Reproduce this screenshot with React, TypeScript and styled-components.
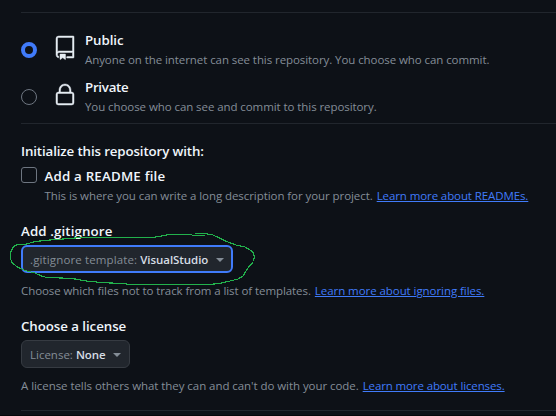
import React from "react";
import styled, { createGlobalStyle } from "styled-components";

const GlobalStyle = createGlobalStyle`
  * { box-sizing: border-box; }
  body {
    margin: 0;
    background: #0d1117;
    color: #f0f6fc;
    font-family: "Open Sans", "Noto Sans", sans-serif;
    overflow: hidden;
  }
`;

const Form = styled.main`
  display: flex;
  flex-direction: column;
  height: 416px;
  padding: 12px 0 0 21px;
  border-bottom: 1px solid #05070a;
`;

const Divider = styled.hr`
  width: 100%;
  height: 1px;
  margin: 0;
  border: 0;
  background: #21262d;
`;

const Choices = styled.section`
  display: flex;
  flex-direction: column;
  gap: 9px;
  padding: 17px 0 8px;
`;

const Choice = styled.label`
  display: flex;
  height: 38px;
`;

const Radio = styled.span<{ $checked?: boolean }>`
  width: 16px;
  height: 16px;
  margin: 12px 16px 0 0;
  border-radius: 50%;
  border: ${(p) => (p.$checked ? "4px solid #407bfa" : "1px solid #6e7681")};
`;

const Icon = styled.svg`
  width: 24px;
  height: 24px;
  margin: 6px 8px 0 0;
  fill: #e6edf3;
  stroke: #e6edf3;
  stroke-width: 0.45px;
  overflow: visible;
`;

const Copy = styled.div`
  display: flex;
  flex-direction: column;
  gap: 1px;
`;

const Title = styled.div<{ $track?: number }>`
  font-size: 13.3px;
  font-weight: 600;
  line-height: 20px;
  letter-spacing: ${(p) => p.$track ?? -0.08}px;
  white-space: nowrap;
`;

const Hint = styled.p<{ $track?: number }>`
  display: flex;
  gap: 4px;
  margin: 0;
  color: #848d97;
  font-size: 11.5px;
  line-height: 17px;
  letter-spacing: ${(p) => p.$track ?? -0.075}px;
  white-space: nowrap;
`;

const Link = styled.a<{ $track: number }>`
  color: #407bfa;
  letter-spacing: ${(p) => p.$track}px;
  text-decoration: underline;
  text-decoration-thickness: 1px;
  text-underline-offset: 1px;
`;

const Readme = styled.section`
  display: flex;
  flex-direction: column;
  gap: 5px;
  padding: 17px 0;
`;

const CheckRow = styled.label`
  display: flex;
  gap: 7.5px;
`;

const Checkbox = styled.span`
  width: 16px;
  height: 16px;
  margin-top: 1px;
  border: 1px solid #6e7681;
  border-radius: 3px;
`;

const Field = styled.section`
  position: relative;
  display: flex;
  flex-direction: column;
  align-items: flex-start;
  margin-bottom: 17px;
  &:last-of-type { margin-bottom: 16px; }
`;

const Select = styled.button<{ $focused?: boolean }>`
  display: flex;
  align-items: flex-start;
  width: ${(p) => (p.$focused ? 212 : 109)}px;
  height: 28px;
  margin: 4px 0 9px;
  padding: ${(p) => (p.$focused ? "4px 7px" : "5px 8px")};
  border: ${(p) => (p.$focused ? "2px solid #407bfa" : "1px solid #363b42")};
  border-radius: 6px;
  background: #21262d;
  color: #848d97;
  font: 400 11.5px/17px "Open Sans", sans-serif;
  letter-spacing: ${(p) => (p.$focused ? 0.13 : 0)}px;
  white-space: nowrap;
`;

const Value = styled.strong`
  margin-left: 3px;
  color: #d6dde4;
  font-weight: 600;
  letter-spacing: -0.06px;
`;

const Caret = styled.span`
  margin: 7px 0 0 auto;
  border: 4px solid transparent;
  border-top-color: #848d97;
  border-bottom: 0;
`;

const Scribble = styled.svg`
  position: absolute;
  top: 9px;
  left: -13px;
  width: 250px;
  height: 58px;
  fill: none;
  stroke: #22b14c;
  stroke-width: 1.15px;
  pointer-events: none;
`;

export default function App() {
  return (
    <>
      <GlobalStyle />
      <Form>
        <Divider />
        <Choices>
          <Choice>
            <Radio $checked />
            <Icon viewBox="0 0 24 24">
              <path d="M3 2.75A2.75 2.75 0 0 1 5.75 0h14.5a.75.75 0 0 1 .75.75v20.5a.75.75 0 0 1-.75.75h-6a.75.75 0 0 1 0-1.5h5.25v-4H6A1.5 1.5 0 0 0 4.5 18v.75c0 .716.43 1.334 1.05 1.605a.75.75 0 0 1-.6 1.374A3.25 3.25 0 0 1 3 18.75ZM19.5 1.5H5.75c-.69 0-1.25.56-1.25 1.25v12.651A2.989 2.989 0 0 1 6 15h13.5Z" />
              <path d="M7 18.25a.25.25 0 0 1 .25-.25h5a.25.25 0 0 1 .25.25v5.01a.25.25 0 0 1-.397.201l-2.206-1.604a.25.25 0 0 0-.294 0L7.397 23.46a.25.25 0 0 1-.397-.2v-5.01Z" />
            </Icon>
            <Copy>
              <Title>Public</Title>
              <Hint>Anyone on the internet can see this repository. You choose who can commit.</Hint>
            </Copy>
          </Choice>
          <Choice>
            <Radio />
            <Icon viewBox="0 0 24 24">
              <path d="M6 9V7.25C6 3.845 8.503 1 12 1s6 2.845 6 6.25V9h.5a2.5 2.5 0 0 1 2.5 2.5v8a2.5 2.5 0 0 1-2.5 2.5h-13A2.5 2.5 0 0 1 3 19.5v-8A2.5 2.5 0 0 1 5.5 9Zm-1.5 2.5v8a1 1 0 0 0 1 1h13a1 1 0 0 0 1-1v-8a1 1 0 0 0-1-1h-13a1 1 0 0 0-1 1Zm3-4.25V9h9V7.25c0-2.67-1.922-4.75-4.5-4.75-2.578 0-4.5 2.08-4.5 4.75Z" />
            </Icon>
            <Copy>
              <Title $track={-0.27}>Private</Title>
              <Hint>You choose who can see and commit to this repository.</Hint>
            </Copy>
          </Choice>
        </Choices>
        <Divider />
        <Readme>
          <Title $track={-0.12}>Initialize this repository with:</Title>
          <CheckRow>
            <Checkbox />
            <Copy>
              <Title $track={0.2}>Add a README file</Title>
              <Hint $track={-0.068}>
                This is where you can write a long description for your project.
                <Link $track={-0.1}>Learn more about READMEs.</Link>
              </Hint>
            </Copy>
          </CheckRow>
        </Readme>
        <Field>
          <Title $track={0.12}>Add .gitignore</Title>
          <Select $focused>
            .gitignore template:
            <Value>VisualStudio</Value>
            <Caret />
          </Select>
          <Hint>
            Choose which files not to track from a list of templates.
            <Link $track={-0.06}>Learn more about ignoring files.</Link>
          </Hint>
          <Scribble viewBox="8 230 250 58" shapeRendering="crispEdges">
            <path d="M195 233.5H205L213 235L221.5 239L226.5 241.5L236 245L245 247L252.5 251.5L254.5 256.5L253.5 261.5L248 268L243 276L238 279L230 281L220 283.3L210 284.5H167L161.5 284.5H128L125 283.5L103 282.7L86.5 281L75 279L66.5 278.2L46.5 277.5L41.5 276L35 273L25 270.5L16.5 266.5L11.5 262L10.5 258V252.5L13.5 246.5L17.5 244.5H25L35 241.5L50 240L70 238.5L80 237.5H153L163 235.8L168 234.7L173 234.5H191L193 235.5H205" />
          </Scribble>
        </Field>
        <Field>
          <Title $track={-0.06}>Choose a license</Title>
          <Select>
            License:
            <Value>None</Value>
            <Caret />
          </Select>
          <Hint $track={-0.06}>
            A license tells others what they can and can't do with your code.
            <Link $track={-0.12}>Learn more about licenses.</Link>
          </Hint>
        </Field>
        <Divider />
      </Form>
    </>
  );
}
